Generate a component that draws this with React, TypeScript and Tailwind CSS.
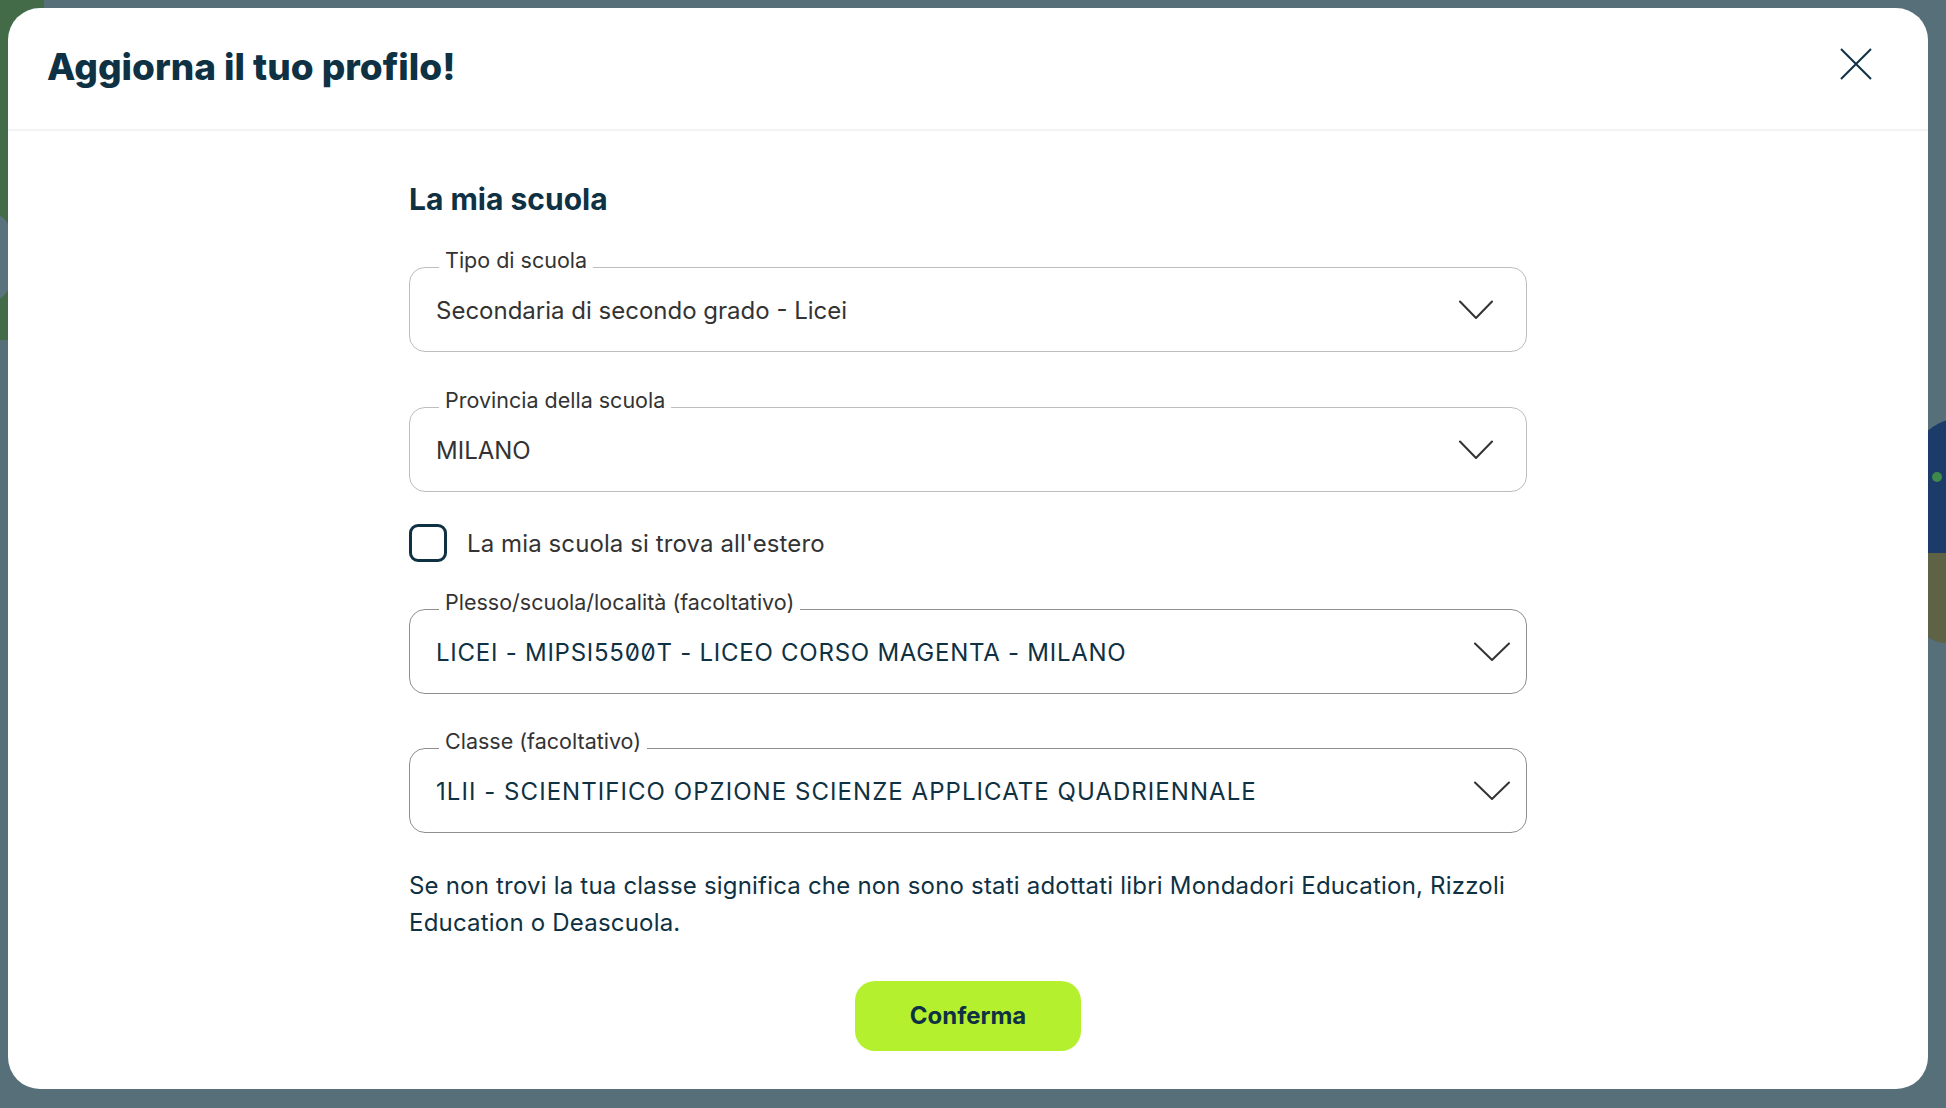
import React from "react";

const Chevron = ({ w = 34 }: { w?: number }) => (
  <svg width={w} height={20} viewBox={`0 0 ${w} 20`} fill="none">
    <path d={`M1 1.5 L${w / 2} 18 L${w - 1} 1.5`} stroke="#333333" strokeWidth={2} strokeLinecap="round" strokeLinejoin="round" />
  </svg>
);

function Field({
  label,
  value,
  variant = "a",
  valueClass = "",
}: {
  label: string;
  value: string;
  variant?: "a" | "b";
  valueClass?: string;
}) {
  const isB = variant === "b";
  return (
    <div
      className={
        "relative h-[85px] rounded-[16px] border flex items-center justify-between pl-[26px] " +
        (isB ? "border-[#8f8f8f] pr-[16px]" : "border-[#bdbdbd] pr-[33px]")
      }
    >
      <span className="absolute left-[29px] top-[-19px] bg-white px-[6px] text-[21.5px] leading-[22px] text-[#333333]">
        {label}
      </span>
      <span
        className={
          isB
            ? "pt-[2px] text-[24px] text-[#0e3143] slashed-zero " + valueClass
            : "pt-[2px] text-[24px] text-[#333333]"
        }
      >
        {value}
      </span>
      <Chevron w={isB ? 36 : 34} />
    </div>
  );
}

export default function App() {
  return (
    <div
      className="relative w-full h-[1108px] overflow-hidden bg-[#566f79] p-[8px]"
      style={{ fontFamily: "Inter, 'Noto Sans', sans-serif" }}
    >
      {/* background decoration */}
      <div className="absolute left-0 top-0 w-[44px] h-[340px] bg-[#436b47]" />
      <div className="absolute left-[-30px] top-[213px] w-[40px] h-[88px] rounded-full bg-[#5a727c]" />
      <div className="absolute right-[-60px] top-[417px] w-[100px] h-[140px] rounded-tl-[60px] bg-[#1d3b68]" />
      <div className="absolute right-[4px] top-[472px] w-[10px] h-[10px] rounded-full bg-[#3d8a4a]" />
      <div className="absolute right-0 top-[553px] w-[30px] h-[90px] rounded-bl-[40px] bg-[#5e6346]" />

      <div className="relative w-[1920px] h-[1081px] bg-white rounded-[32px] flex flex-col">
        <div className="h-[123px] border-b-2 border-[#f1f3f4] flex items-center justify-between pl-[39px] pr-[56px] pb-[4px]">
          <h1 className="text-[37px] font-extrabold text-[#0e3143]">
            Aggiorna il tuo profilo!
          </h1>
          <button className="w-[32px] h-[32px] mb-[5px] flex items-center justify-center">
            <svg width="32" height="32" viewBox="0 0 32 32" fill="none">
              <path d="M1 1 L31 31 M31 1 L1 31" stroke="#0e3143" strokeWidth="2" />
            </svg>
          </button>
        </div>

        <div className="w-[1118px] mx-auto flex flex-col">
          <h2 className="mt-[48px] text-[30px] font-bold text-[#0e3143] leading-[40px]">
            La mia scuola
          </h2>

          <div className="mt-[48px]">
            <Field label="Tipo di scuola" value="Secondaria di secondo grado - Licei" />
          </div>
          <div className="mt-[55px]">
            <Field label="Provincia della scuola" value="MILANO" />
          </div>

          <label className="mt-[32px] flex items-center gap-[20px] h-[38px]">
            <span className="w-[38px] h-[38px] rounded-[9px] border-[3px] border-[#0e3143] bg-white" />
            <span className="pt-[2px] text-[24px] text-[#333333] tracking-[0.1px]">La mia scuola si trova all'estero</span>
          </label>

          <div className="mt-[47px]">
            <Field
              label="Plesso/scuola/località (facoltativo)"
              value="LICEI - MIPSI5500T - LICEO CORSO MAGENTA - MILANO"
              variant="b"
              valueClass="tracking-[0.75px]"
            />
          </div>
          <div className="mt-[54px]">
            <Field
              label="Classe (facoltativo)"
              value="1LII - SCIENTIFICO OPZIONE SCIENZE APPLICATE QUADRIENNALE"
              variant="b"
              valueClass="tracking-[1.05px]"
            />
          </div>

          <p className="mt-[34px] text-[24px] leading-[37px] text-[#0e3143] tracking-[0.2px] pr-[10px]">
            Se non trovi la tua classe significa che non sono stati adottati libri Mondadori Education, Rizzoli Education o Deascuola.
          </p>

          <div className="mt-[40px] flex justify-center">
            <button className="w-[226px] h-[70px] rounded-[20px] bg-[#b4f02e] text-[24px] font-bold text-[#0e3143]">
              Conferma
            </button>
          </div>
        </div>
      </div>
    </div>
  );
}
